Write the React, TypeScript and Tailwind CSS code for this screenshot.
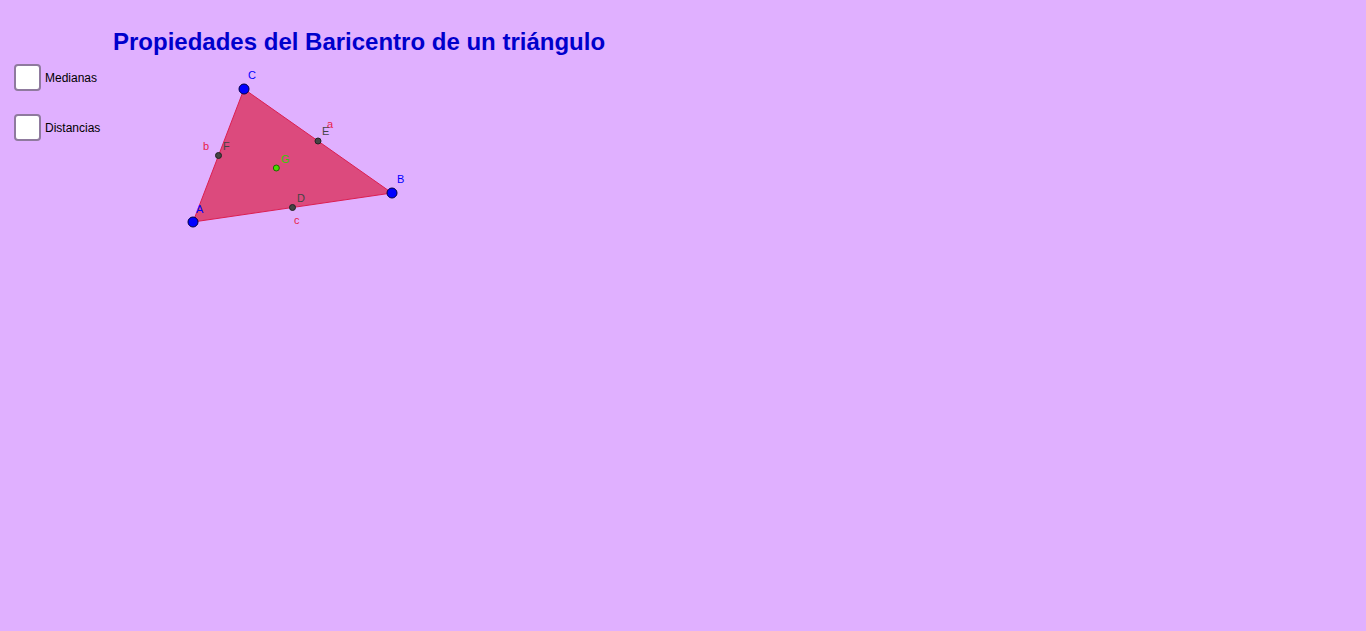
import React from "react";

// Vertices of the triangle (canvas coordinates)
const A = { x: 193, y: 222 };
const B = { x: 392, y: 193 };
const C = { x: 244, y: 89 };
const mid = (p: { x: number; y: number }, q: { x: number; y: number }) => ({
  x: (p.x + q.x) / 2,
  y: (p.y + q.y) / 2,
});
const D = mid(A, B);
const E = mid(B, C);
const F = mid(C, A);
const G = { x: (A.x + B.x + C.x) / 3, y: (A.y + B.y + C.y) / 3 };

function Checkbox({ label }: { label: string }) {
  return (
    <label className="flex items-center gap-[4px]">
      <span className="h-[27px] w-[27px] rounded-[4px] border-2 border-[#8f7a9e] bg-white" />
      <span className="text-[12px] text-black">{label}</span>
    </label>
  );
}

export default function App() {
  const font = { fontFamily: '"Liberation Sans", Arial, sans-serif' };
  return (
    <main
      className="relative h-[631px] w-full overflow-hidden bg-[#e0b0ff]"
      style={font}
    >
      {/* Canvas del dibujo */}
      <svg className="absolute inset-0" width="1366" height="631">
        <polygon
          points={`${A.x},${A.y} ${B.x},${B.y} ${C.x},${C.y}`}
          fill="#dc4a7d"
          stroke="#dc1e50"
          strokeWidth="1"
        />
        <g fontSize="11" fontFamily='"Liberation Sans", Arial, sans-serif'>
          <text x="327" y="128" fill="#e8204a">a</text>
          <text x="203" y="150" fill="#e8204a">b</text>
          <text x="294" y="224" fill="#e8204a">c</text>
          <text x="322" y="135" fill="#444444">E</text>
          <text x="223" y="150" fill="#444444">F</text>
          <text x="297" y="202" fill="#444444">D</text>
          <text x="281" y="163" fill="#33cc00">G</text>
          <text x="248" y="79" fill="#0000ff">C</text>
          <text x="397" y="183" fill="#0000ff">B</text>
          <text x="196" y="213" fill="#0000ff">A</text>
        </g>
        {[D, E, F].map((p, i) => (
          <circle key={i} cx={p.x} cy={p.y} r="3" fill="#444444" stroke="#222222" strokeWidth="1" />
        ))}
        <circle cx={G.x} cy={G.y} r="3" fill="#44dd00" stroke="#226600" strokeWidth="1" />
        {[A, B, C].map((p, i) => (
          <circle key={i} cx={p.x} cy={p.y} r="5" fill="#0000ff" stroke="#000044" strokeWidth="1" />
        ))}
      </svg>

      <div className="relative">
        <h1 className="pl-[113px] pt-[28px] text-[24px] font-bold leading-[28px] text-[#0000cc]">
          Propiedades del Baricentro de un triángulo
        </h1>
        <div className="mt-[8px] flex flex-col gap-[23px] pl-[14px]">
          <Checkbox label="Medianas" />
          <Checkbox label="Distancias" />
        </div>
      </div>
    </main>
  );
}
